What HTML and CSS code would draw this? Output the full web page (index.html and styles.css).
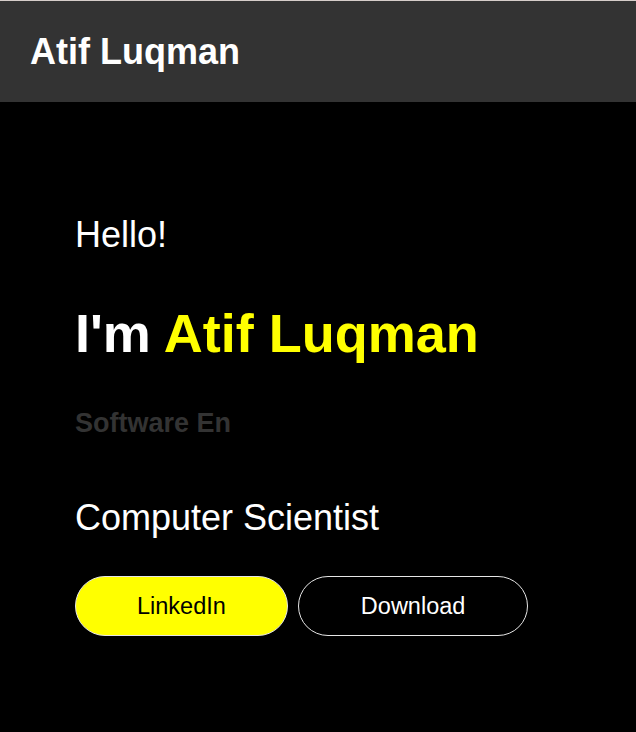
FILE: index.html
```html
<!DOCTYPE html>
<html lang="en">
<head>
<meta charset="utf-8">
<title>Atif Luqman</title>
<link rel="stylesheet" href="styles.css">
</head>
<body>
<header class="topbar">
  <div class="brand">Atif Luqman</div>
</header>
<main class="hero">
  <p class="hello">Hello!</p>
  <h1 class="name">I'm <span class="accent">Atif Luqman</span></h1>
  <p class="typing">Software En</p>
  <p class="role">Computer Scientist</p>
  <div class="actions">
    <a class="btn btn-primary" href="#">LinkedIn</a>
    <a class="btn btn-outline" href="#">Download</a>
  </div>
</main>
</body>
</html>
```
FILE: styles.css
```css
html, body {
  margin: 0;
  padding: 0;
  background: #000;
  font-family: "Liberation Sans", Arial, sans-serif;
  color: #fff;
}
.topbar {
  box-sizing: border-box;
  height: 102px;
  border-top: 1px solid #d6cdca;
  background: #333333;
  display: flex;
  align-items: center;
  padding-left: 30px;
}
.brand {
  font-size: 36px;
  line-height: 1;
  font-weight: bold;
  color: #fff;
}
.hero {
  padding: 115px 0 0 75px;
}
.hero p, .hero h1 {
  margin: 0;
  line-height: 1;
}
.hello {
  font-size: 36px;
}
.name {
  margin-top: 53px !important;
  font-size: 54px;
  font-weight: bold;
}
.accent {
  color: #ffff00;
}
.typing {
  margin-top: 50px !important;
  font-size: 27px;
  font-weight: bold;
  color: #333333;
}
.role {
  margin-top: 63px !important;
  font-size: 36px;
}
.actions {
  margin-top: 40px;
  display: flex;
  gap: 10px;
}
.btn {
  box-sizing: border-box;
  height: 60px;
  display: flex;
  align-items: center;
  justify-content: center;
  padding: 0 61px;
  border: 1px solid #e6e6e6;
  border-radius: 30px;
  font-size: 23.5px;
  text-decoration: none;
}
.btn-primary {
  background: #ffff00;
  color: #000;
}
.btn-outline {
  background: #000;
  color: #fff;
  padding: 0 62px;
}
```
